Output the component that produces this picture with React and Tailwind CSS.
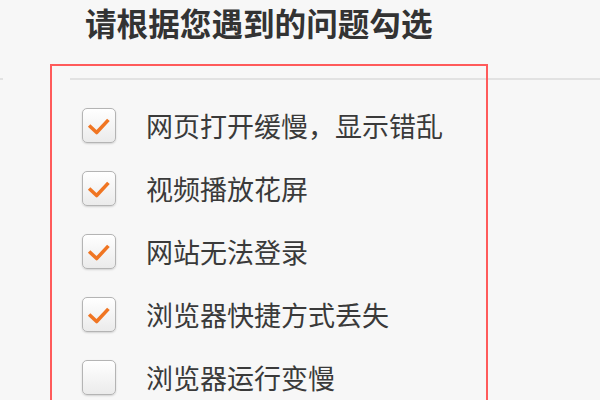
import { useState } from 'react'

const ITEMS = [
  { label: '网页打开缓慢，显示错乱', checked: true },
  { label: '视频播放花屏', checked: true },
  { label: '网站无法登录', checked: true },
  { label: '浏览器快捷方式丢失', checked: true },
  { label: '浏览器运行变慢', checked: false },
]

function CheckBox({ checked, onClick }) {
  return (
    <button
      onClick={onClick}
      className="w-[34px] h-[35px] shrink-0 rounded-[5px] border border-[#b4b4b4] bg-gradient-to-b from-white to-[#ebebeb] shadow-[0_1px_2px_rgba(0,0,0,0.15)]"
    >
      {checked && (
        <svg viewBox="0 0 34 35" className="w-full h-full">
          <polyline
            points="6.5,17.5 14.5,25 27,11.5"
            fill="none"
            stroke="#f07522"
            strokeWidth="3.8"
            strokeLinejoin="round"
          />
        </svg>
      )}
    </button>
  )
}

export default function App() {
  const [items, setItems] = useState(ITEMS)

  const toggle = (i) => {
    setItems(items.map((it, idx) => (idx === i ? { ...it, checked: !it.checked } : it)))
  }

  return (
    <div
      className="relative w-[600px] h-[400px] overflow-hidden bg-[#f7f7f7]"
      style={{ fontFamily: '"Noto Sans CJK SC", "Noto Sans", sans-serif' }}
    >
      {/* Title */}
      <h1 className="pl-[85px] pt-[3px] text-[31.6px] font-bold leading-[38px] text-[#333]">
        请根据您遇到的问题勾选
      </h1>

      {/* Divider */}
      <div className="mt-[37px] flex">
        <div className="w-[3px] h-[2px] bg-[#e2e2e2]" />
        <div className="ml-[67px] flex-1 h-[2px] bg-[#e2e2e2]" />
      </div>

      {/* Options */}
      <ul className="pl-[82px] pt-[28px] flex flex-col gap-[28px]">
        {items.map((it, i) => (
          <li key={it.label} className="flex items-center gap-[30px] h-[35px]">
            <CheckBox checked={it.checked} onClick={() => toggle(i)} />
            <span className="text-[27px] leading-[35px] text-[#3a3a3a]">{it.label}</span>
          </li>
        ))}
      </ul>

      {/* Red highlight frame */}
      <div className="absolute left-[50px] top-[64px] w-[438px] h-[400px] border-2 border-[#ff5b5b] pointer-events-none" />
    </div>
  )
}
